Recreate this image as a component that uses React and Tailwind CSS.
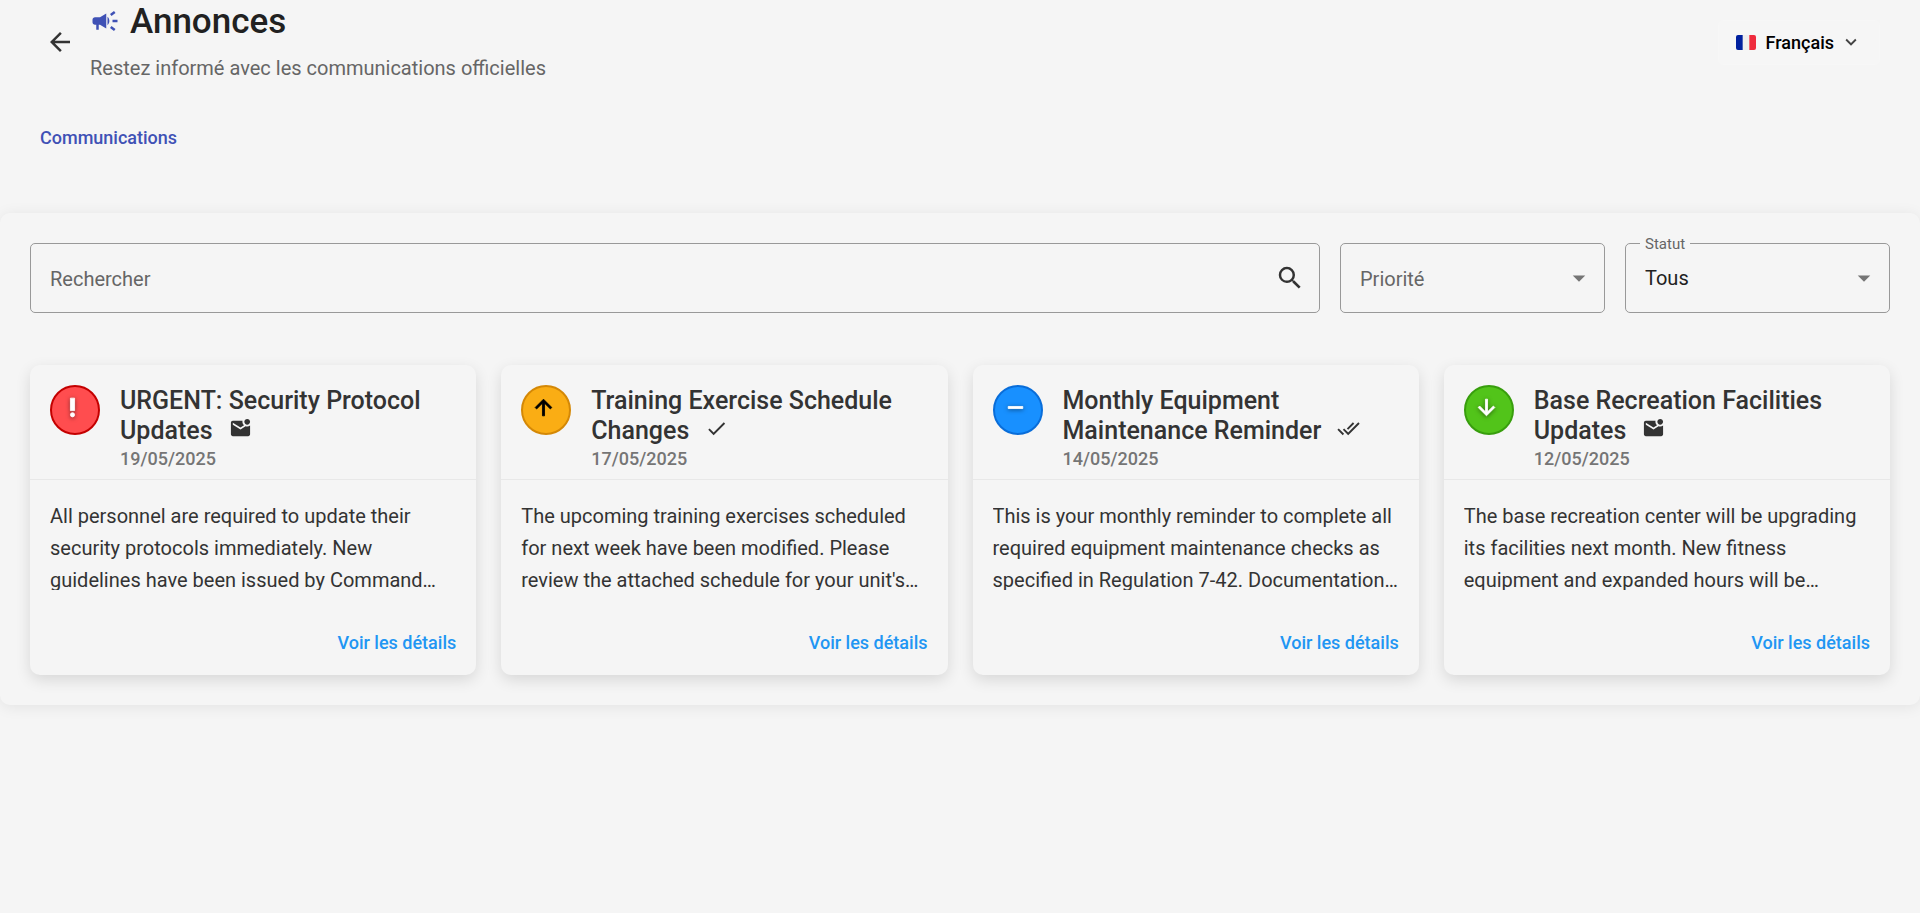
import React, { useState } from "react";
import {
  MdArrowBack,
  MdArrowDropDown,
  MdCampaign,
  MdDone,
  MdDoneAll,
  MdExpandMore,
  MdMarkEmailUnread,
  MdSearch,
} from "react-icons/md";

const priorityPaths = {
  urgent: "M10 3h4v12h-4zM12 17a2 2 0 1 0 0 4 2 2 0 1 0 0-4z",
  high: "M4 12l1.41 1.41L11 7.83V20h2V7.83l5.58 5.59L20 12l-8-8-8 8z",
  medium: "M19 13H5v-2h14v2z",
  low: "M20 12l-1.41-1.41L13 16.17V4h-2v12.17l-5.58-5.59L4 12l8 8 8-8z",
};

const announcements = [
  {
    title: "URGENT: Security Protocol Updates",
    date: "19/05/2025",
    text: "All personnel are required to update their security protocols immediately. New guidelines have been issued by Command…",
    priority: "urgent",
    Status: MdMarkEmailUnread,
    badge: "bg-[#ff4d4f] border-[#c40000] text-white",
    shadow: true,
  },
  {
    title: "Training Exercise Schedule Changes",
    date: "17/05/2025",
    text: "The upcoming training exercises scheduled for next week have been modified. Please review the attached schedule for your unit's…",
    priority: "high",
    Status: MdDone,
    badge: "bg-[#faad14] border-[#d48806] text-black",
    shadow: false,
  },
  {
    title: "Monthly Equipment Maintenance Reminder",
    date: "14/05/2025",
    text: "This is your monthly reminder to complete all required equipment maintenance checks as specified in Regulation 7-42. Documentation…",
    priority: "medium",
    Status: MdDoneAll,
    badge: "bg-[#1890ff] border-[#096dd9] text-white",
    shadow: true,
  },
  {
    title: "Base Recreation Facilities Updates",
    date: "12/05/2025",
    text: "The base recreation center will be upgrading its facilities next month. New fitness equipment and expanded hours will be…",
    priority: "low",
    Status: MdMarkEmailUnread,
    badge: "bg-[#52c41a] border-[#389e0d] text-white",
    shadow: true,
  },
];

function Flag() {
  return (
    <svg viewBox="0 0 20 15" className="h-[15px] w-5 rounded-[2px]" aria-hidden="true">
      <rect width="7" height="15" fill="#00209f" />
      <rect x="6.67" width="6.67" height="15" fill="#eeeeee" />
      <rect x="13.33" width="6.67" height="15" fill="#ef2b3d" />
    </svg>
  );
}

function PriorityIcon({ name, shadow }) {
  return (
    <svg
      viewBox="0 0 24 24"
      fill="currentColor"
      stroke="currentColor"
      strokeWidth="0.8"
      aria-hidden="true"
      className={shadow ? "size-[25px] drop-shadow-[0_1px_2px_rgba(0,0,0,0.5)]" : "size-[25px]"}
    >
      <path d={priorityPaths[name]} />
    </svg>
  );
}

function Header() {
  return (
    <header className="flex items-center justify-between pr-10 pl-[30px]">
      <div className="flex items-center">
        <button type="button" aria-label="Retour" className="flex size-[60px] items-center justify-center text-[#333]">
          <MdArrowBack className="size-[30px]" />
        </button>
        <div>
          <h1 className="flex items-start gap-2.5 text-[35px] leading-[44px] font-medium text-[#212121]">
            <MdCampaign className="mt-1.5 size-[30px] text-[#3f51b5]" />
            Annonces
          </h1>
          <p className="mt-2 text-[20px] leading-8 text-[#666]">
            Restez informé avec les communications officielles
          </p>
        </div>
      </div>
      <button
        type="button"
        className="flex h-[45px] items-center rounded-[5px] border border-[#f7f7f7] bg-[#f6f6f6] px-[17px] text-[18px] font-medium text-black"
      >
        <Flag />
        <span className="ml-2.5">Français</span>
        <MdExpandMore className="ml-1.5 size-[22px] text-[#444]" />
      </button>
    </header>
  );
}

function FieldLabel({ htmlFor, floating, children }) {
  return (
    <label
      htmlFor={htmlFor}
      className={
        floating
          ? "absolute -top-[9px] left-[15px] bg-[#f5f5f5] px-[5px] text-[15px] leading-5 text-[#666]"
          : "pointer-events-none absolute top-5 left-5 text-[20px] leading-8 text-[#666]"
      }
    >
      {children}
    </label>
  );
}

function Select({ id, label, initial, options }) {
  const [value, setValue] = useState(initial);
  return (
    <div className="relative w-[265px]">
      <FieldLabel htmlFor={id} floating={value !== ""}>
        {label}
      </FieldLabel>
      <select
        id={id}
        value={value}
        onChange={(event) => setValue(event.target.value)}
        className="block h-[70px] w-full appearance-none rounded-[5px] border border-[#999] bg-transparent px-[19px] text-[20px] text-[#212121]"
      >
        {options.map((option) => (
          <option key={option}>{option}</option>
        ))}
      </select>
      <MdArrowDropDown className="pointer-events-none absolute top-5 right-[11px] size-[30px] text-[#757575]" />
    </div>
  );
}

function SearchField() {
  const [query, setQuery] = useState("");
  return (
    <div className="relative flex-1">
      <FieldLabel htmlFor="search" floating={query !== ""}>
        Rechercher
      </FieldLabel>
      <input
        id="search"
        type="text"
        value={query}
        onChange={(event) => setQuery(event.target.value)}
        className="block h-[70px] w-full rounded-[5px] border border-[#999] bg-transparent pr-[60px] pl-[19px] text-[20px] text-[#212121] outline-none"
      />
      <MdSearch className="pointer-events-none absolute top-5 right-[15px] size-[30px] text-[#333]" />
    </div>
  );
}

function Filters() {
  return (
    <form className="flex gap-5">
      <SearchField />
      <Select id="priority" label="Priorité" initial="" options={["", "Urgente", "Haute", "Moyenne", "Basse"]} />
      <Select id="status" label="Statut" initial="Tous" options={["Tous", "Non lu", "Lu", "Confirmé"]} />
    </form>
  );
}

function Card({ item }) {
  const { Status } = item;
  return (
    <article className="rounded-[10px] bg-[#f5f5f5] shadow-[0_5px_15px_rgba(0,0,0,0.12)]">
      <header className="flex gap-5 border-b border-[#e8e8e8] px-5 pt-5 pb-[7px]">
        <div className={"flex size-[50px] shrink-0 rounded-full border-2 pt-[8px] pl-[8px] " + item.badge}>
          <PriorityIcon name={item.priority} shadow={item.shadow} />
        </div>
        <div className="min-w-0 flex-1 pt-px">
          <h2 className="text-[25px] leading-[30px] font-medium text-[#333]">
            {item.title}
            <Status className="ml-4 inline size-[23px] align-[-1px]" />
          </h2>
          <p className="text-[18px] leading-[26px] font-medium text-[#757575]">{item.date}</p>
        </div>
      </header>
      <div className="px-5 pt-5">
        <p className="h-[90px] overflow-hidden text-[20px] leading-8 text-[#333]">{item.text}</p>
      </div>
      <div className="flex justify-end px-5 pt-[30px] pb-[10px]">
        <a href="#details" className="text-[18px] leading-[45px] font-medium text-[#2196f3]">
          Voir les détails
        </a>
      </div>
    </article>
  );
}

export default function App() {
  return (
    <div className="min-h-screen bg-[#f5f5f5] font-[Roboto,sans-serif]">
      <Header />
      <nav className="px-10 pt-[34px]">
        <a href="#communications" className="text-[18px] leading-[40px] font-medium text-[#3f51b5]">
          Communications
        </a>
      </nav>
      <main className="mt-[55px] rounded-[10px] p-[30px] shadow-[0_2px_15px_rgba(0,0,0,0.08)]">
        <Filters />
        <section className="mt-[52px] grid grid-cols-4 gap-[25px]">
          {announcements.map((item) => (
            <Card key={item.title} item={item} />
          ))}
        </section>
      </main>
    </div>
  );
}
